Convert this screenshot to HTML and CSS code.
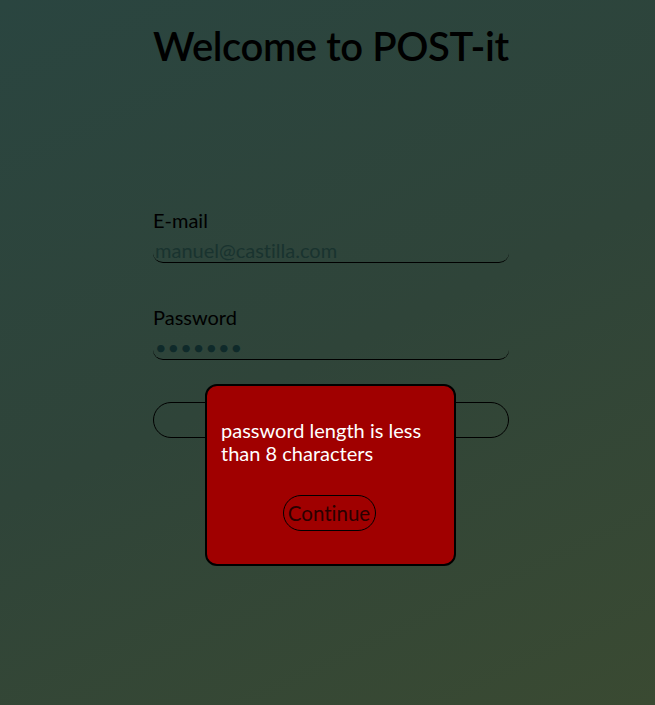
FILE: index.html
```html
<!DOCTYPE html>
<html lang="en">
<head>
<meta charset="utf-8">
<title>POST-it</title>
<link rel="stylesheet" href="styles.css">
</head>
<body>
<main class="page">
  <h1 class="title">Welcome to POST-it</h1>
  <form class="form">
    <label class="field">
      <span class="label">E-mail</span>
      <input class="input" type="text" value="manuel@castilla.com">
    </label>
    <label class="field">
      <span class="label">Password</span>
      <input class="input input-pass" type="password" value="1234567">
    </label>
    <button class="submit" type="button" aria-label="Log in"></button>
  </form>
  <div class="modal">
    <p class="modal-text">password length is less than 8 characters</p>
    <button class="modal-btn" type="button">Continue</button>
  </div>
</main>
</body>
</html>
```
FILE: styles.css
```css
html, body {
  margin: 0;
  height: 100%;
}
body {
  background: linear-gradient(155deg, #2a4540 0%, #2f4439 50%, #3a4a32 100%);
  font-family: Lato, "Noto Sans", sans-serif;
  font-variant-ligatures: none;
  color: #000;
}
.page {
  position: relative;
  width: 356px;
  margin: 0 auto;
  padding-left: 7px;
  padding-top: 22px;
}
.title {
  margin: 0;
  font-size: 40px;
  font-weight: 600;
  line-height: 48px;
  letter-spacing: -0.4px;
  white-space: nowrap;
}
.form {
  display: flex;
  flex-direction: column;
  margin-top: 138px;
}
.field {
  display: flex;
  flex-direction: column;
  margin-bottom: 42px;
}
.label {
  font-size: 20px;
  line-height: 24px;
}
.input {
  font-family: Lato, sans-serif;
  font-variant-ligatures: none;
  font-size: 20px;
  height: 25px;
  padding: 0 2px;
  margin-top: 5px;
  background: transparent;
  border: none;
  border-bottom: 1px solid #000;
  border-radius: 0 0 10px 10px;
  color: #19332f;
  outline: none;
}
.input-pass {
  letter-spacing: 1px;
  color: #0f2a2a;
}
.submit {
  height: 36px;
  margin-top: 0;
  border: 1px solid #000;
  border-radius: 18px;
  background: transparent;
}
.modal {
  position: absolute;
  left: 59px;
  top: 384px;
  width: 217px;
  height: 146px;
  padding: 16px 16px 16px 14px;
  background: #a00000;
  border: 2px solid #000;
  border-radius: 12px;
  display: flex;
  flex-direction: column;
  align-items: center;
}
.modal-text {
  align-self: stretch;
  margin: 17px 0 0;
  font-size: 20px;
  line-height: 23px;
  color: #fff;
}
.modal-btn {
  margin-top: 30px;
  height: 36px;
  padding: 0 5px 0 4px;
  border: 1px solid #000;
  border-radius: 18px;
  background: transparent;
  font-family: Lato, sans-serif;
  font-variant-ligatures: none;
  font-size: 20.5px;
  color: #2a0000;
}
```
